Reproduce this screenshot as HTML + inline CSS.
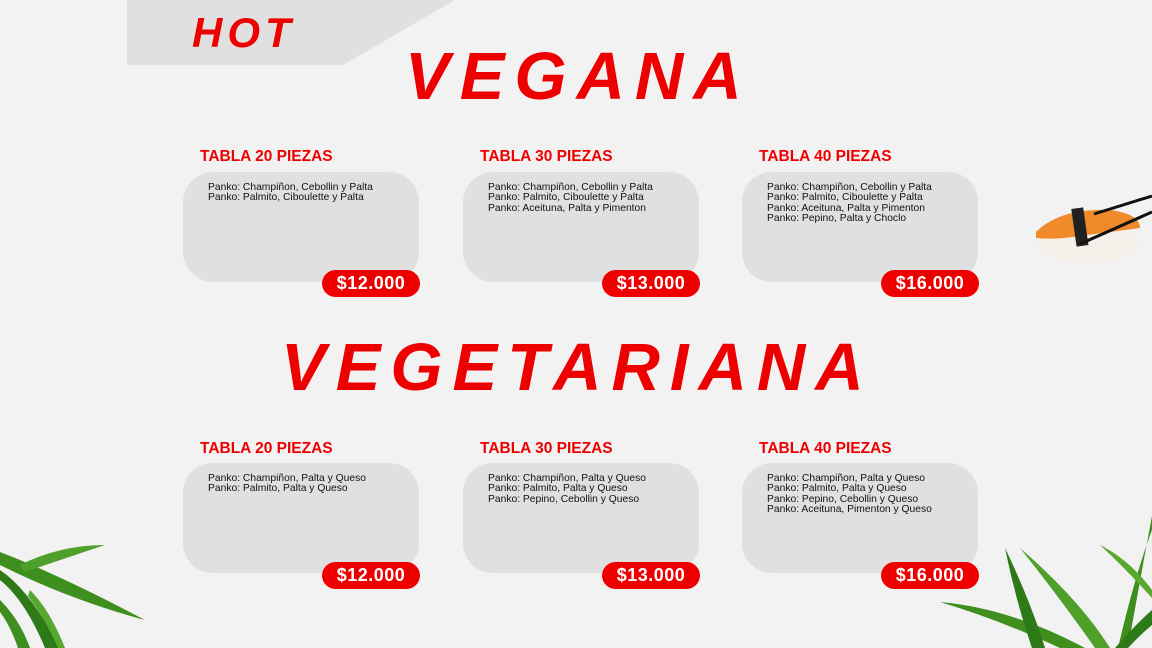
<!DOCTYPE html>
<html><head><meta charset="utf-8"><style>
*{margin:0;padding:0;box-sizing:border-box}
body{width:1152px;height:648px;background:#f2f2f2;position:relative;overflow:hidden;font-family:"Liberation Sans",Arial,sans-serif}
.banner{position:absolute;left:0;top:0}
.big{position:absolute;color:#ee0000;font-weight:bold;font-style:italic;white-space:nowrap;line-height:1}
.t{position:absolute;color:#ee0000;font-weight:bold;font-size:15.5px;white-space:nowrap}
.card{position:absolute;width:236px;height:110px;background:#e0e0e0;border-radius:30px;padding:11px 0 0 25px;font-size:10.3px;line-height:10.4px;color:#111}
.p{position:absolute;width:98px;height:27px;background:#ee0000;border-radius:14px;color:#fff;font-weight:bold;font-size:18px;text-align:center;line-height:27px;letter-spacing:0.5px}
</style></head><body>
<svg class="banner" width="1152" height="648" style="position:absolute;left:0;top:0">
<polygon points="127,0 455,0 343,65 127,65" fill="#e0e0e0"/>
<g>
<ellipse cx="1088" cy="242" rx="52" ry="20" fill="#f5f0ea"/>
<path d="M1036 232 Q1060 208 1110 210 Q1140 214 1140 228 Q1110 232 1080 236 Q1055 240 1036 238Z" fill="#f08a2a"/>
<rect x="1074" y="208" width="12" height="38" fill="#222" transform="rotate(-8 1080 228)"/>
<line x1="1080" y1="244" x2="1152" y2="212" stroke="#111" stroke-width="3"/>
<line x1="1094" y1="214" x2="1152" y2="196" stroke="#111" stroke-width="3"/>
</g>
<g fill="#3f8f1f">
<path d="M0 552 Q60 575 145 620 Q70 600 0 565Z"/>
<path d="M20 565 Q60 545 105 545 Q60 560 25 572Z" fill="#4ea02a"/>
<path d="M0 570 Q30 590 60 648 L45 648 Q25 600 0 580Z" fill="#2f7a18"/>
<path d="M0 600 Q20 620 30 648 L18 648 Q10 625 0 612Z"/>
<path d="M30 590 Q50 610 65 648 L58 648 Q45 618 28 596Z" fill="#58a830"/>
</g>
<g fill="#3f8f1f">
<path d="M940 602 Q1010 608 1085 648 L1060 648 Q1000 620 940 602Z"/>
<path d="M1005 548 Q1030 600 1045 648 L1032 648 Q1015 598 1005 548Z" fill="#2f7a18"/>
<path d="M1020 548 Q1080 600 1110 648 L1095 648 Q1060 598 1020 548Z" fill="#4ea02a"/>
<path d="M1152 516 Q1140 580 1128 648 L1118 648 Q1135 575 1152 530Z"/>
<path d="M1100 545 Q1130 560 1152 590 L1152 598 Q1125 568 1100 545Z" fill="#58a830"/>
<path d="M1115 648 Q1135 625 1152 610 L1152 625 Q1140 635 1128 648Z" fill="#2f7a18"/>
</g>
</svg>
<div class="big" style="left:192px;top:12px;font-size:42px;letter-spacing:5px">HOT</div>
<div class="big" style="left:405px;top:43px;font-size:67px;letter-spacing:10px">VEGANA</div>
<div class="big" style="left:281px;top:334px;font-size:67px;letter-spacing:10px">VEGETARIANA</div>

<div class="t" style="left:200px;top:148px">TABLA 20 PIEZAS</div>
<div class="t" style="left:480px;top:148px">TABLA 30 PIEZAS</div>
<div class="t" style="left:759px;top:148px">TABLA 40 PIEZAS</div>
<div class="card" style="left:183px;top:172px">Panko: Champiñon, Cebollin y Palta<br>Panko: Palmito, Ciboulette y Palta</div>
<div class="card" style="left:463px;top:172px">Panko: Champiñon, Cebollin y Palta<br>Panko: Palmito, Ciboulette y Palta<br>Panko: Aceituna, Palta y Pimenton</div>
<div class="card" style="left:742px;top:172px">Panko: Champiñon, Cebollin y Palta<br>Panko: Palmito, Ciboulette y Palta<br>Panko: Aceituna, Palta y Pimenton<br>Panko: Pepino, Palta y Choclo</div>
<div class="p" style="left:322px;top:270px">$12.000</div>
<div class="p" style="left:602px;top:270px">$13.000</div>
<div class="p" style="left:881px;top:270px">$16.000</div>

<div class="t" style="left:200px;top:440px">TABLA 20 PIEZAS</div>
<div class="t" style="left:480px;top:440px">TABLA 30 PIEZAS</div>
<div class="t" style="left:759px;top:440px">TABLA 40 PIEZAS</div>
<div class="card" style="left:183px;top:463px">Panko: Champiñon, Palta y Queso<br>Panko: Palmito, Palta y Queso</div>
<div class="card" style="left:463px;top:463px">Panko: Champiñon, Palta y Queso<br>Panko: Palmito, Palta y Queso<br>Panko: Pepino, Cebollin y Queso</div>
<div class="card" style="left:742px;top:463px">Panko: Champiñon, Palta y Queso<br>Panko: Palmito, Palta y Queso<br>Panko: Pepino, Cebollin y Queso<br>Panko: Aceituna, Pimenton y Queso</div>
<div class="p" style="left:322px;top:562px">$12.000</div>
<div class="p" style="left:602px;top:562px">$13.000</div>
<div class="p" style="left:881px;top:562px">$16.000</div>
</body></html>
